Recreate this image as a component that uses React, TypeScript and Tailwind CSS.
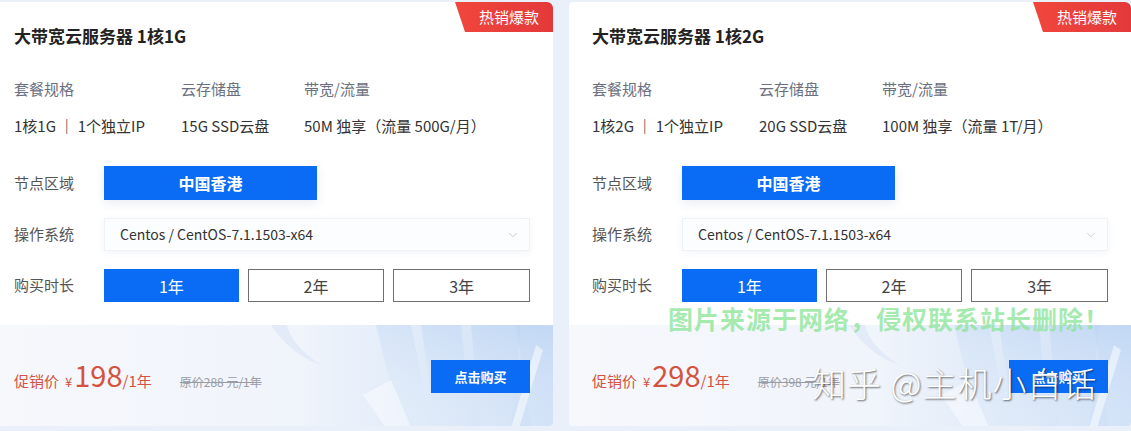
import { ChevronDown } from 'lucide-react';

const plans = [
  {
    name: '大带宽云服务器 1核1G',
    spec: '1核1G ｜ 1个独立IP',
    disk: '15G SSD云盘',
    bw: '50M 独享（流量 500G/月）',
    price: '198',
    orig: '原价288 元/1年',
  },
  {
    name: '大带宽云服务器 1核2G',
    spec: '1核2G ｜ 1个独立IP',
    disk: '20G SSD云盘',
    bw: '100M 独享（流量 1T/月）',
    price: '298',
    orig: '原价398 元/1年',
  },
];

function Decor() {
  // glassy panels in the lower-right of each card
  return (
    <svg className="absolute inset-0 h-full w-full" viewBox="0 0 562 103" preserveAspectRatio="none">
      <defs>
        <linearGradient id="bgGrad" x1="0" y1="0" x2="1" y2="0">
          <stop offset="0" stopColor="#f6f8fc" />
          <stop offset="0.55" stopColor="#f0f4fb" />
          <stop offset="0.8" stopColor="#dde9f8" />
          <stop offset="1" stopColor="#cddff6" />
        </linearGradient>
        <linearGradient id="panel" x1="0" y1="0" x2="0" y2="1">
          <stop offset="0" stopColor="#b9d2f3" stopOpacity="0.7" />
          <stop offset="1" stopColor="#e4eefb" stopOpacity="0.3" />
        </linearGradient>
      </defs>
      <rect width="562" height="103" fill="url(#bgGrad)" />
      <path d="M280 0 Q300 30 330 40 Q300 20 296 0 Z" fill="#dfe8f6" opacity="0.8" />
      <polygon points="385,0 420,0 440,103 410,103" fill="url(#panel)" opacity="0.5" />
      <polygon points="430,0 470,0 480,103 445,103" fill="url(#panel)" opacity="0.6" />
      <polygon points="480,0 530,0 520,103 490,103" fill="url(#panel)" opacity="0.7" />
      <polygon points="525,0 562,0 562,103 540,103" fill="url(#panel)" opacity="0.8" />
      <path d="M372 70 L400 55 L420 103 L395 103 Z" fill="#ffffff" opacity="0.45" />
      <path d="M545 20 L520 103 L528 103 L552 25 Z" fill="#ffffff" opacity="0.5" />
    </svg>
  );
}

function Card({ plan }: { plan: (typeof plans)[number] }) {
  return (
    <div className="relative w-[562px] shrink-0 overflow-hidden rounded-[4px] bg-white">
      <div className="absolute right-0 top-0 flex h-[30px] w-[98px] items-center justify-center rounded-tr-[6px] bg-gradient-to-r from-[#f0463c] to-[#e3393a] pl-[10px] text-[15px] text-white [clip-path:polygon(0_0,100%_0,100%_100%,10px_100%)]">
        热销爆款
      </div>

      <div className="px-[23px] pb-[23px] pt-[22px]">
        <div className="h-6 text-[17px] font-bold leading-6 text-[#222]">{plan.name}</div>

        <div className="mt-[30px] flex text-[15px] leading-[22px] text-[#6b7080]">
          <div className="w-[167px]">套餐规格</div>
          <div className="w-[123px]">云存储盘</div>
          <div>带宽/流量</div>
        </div>
        <div className="mt-[15px] flex text-[15px] leading-[22px] text-[#333]">
          <div className="w-[167px]">{plan.spec}</div>
          <div className="w-[123px]">{plan.disk}</div>
          <div>{plan.bw}</div>
        </div>

        <div className="mt-[29px] flex items-center">
          <div className="w-[90px] text-[15px] text-[#555]">节点区域</div>
          <div className="flex h-[34px] w-[213px] items-center justify-center bg-[#0a6cf4] text-[16px] font-semibold text-white shadow-[0_3px_10px_rgba(30,60,120,0.1)]">
            中国香港
          </div>
        </div>

        <div className="mt-[18px] flex items-center">
          <div className="w-[90px] text-[15px] text-[#555]">操作系统</div>
          <div className="flex h-[33px] flex-1 items-center justify-between border border-[#eef1f5] bg-[#fcfdff] pl-[15px] pr-[9px] text-[14px] text-[#333] shadow-[0_2px_8px_rgba(30,60,120,0.05)]">
            <span>Centos / CentOS-7.1.1503-x64</span>
            <ChevronDown size={14} strokeWidth={1.5} className="text-[#c3c8d2]" />
          </div>
        </div>

        <div className="mt-[18px] flex items-center">
          <div className="w-[90px] text-[15px] text-[#555]">购买时长</div>
          <div className="flex flex-1 gap-[9px]">
            <div className="flex h-[33px] flex-1 items-center justify-center bg-[#0a6cf4] text-[16px] text-white">1年</div>
            <div className="flex h-[33px] flex-1 items-center justify-center border border-[#6f6f6f] bg-white text-[16px] text-[#444]">2年</div>
            <div className="flex h-[33px] flex-1 items-center justify-center border border-[#6f6f6f] bg-white text-[16px] text-[#444]">3年</div>
          </div>
        </div>
      </div>

      <div className="relative h-[103px]">
        <Decor />
        <div className="relative flex h-full items-center justify-between px-[23px]">
          <div className="flex items-baseline text-[#d4533f]">
            <span className="text-[15px]">促销价</span>
            <span className="ml-[6px] text-[13px]">¥</span>
            <span className="ml-[2px] text-[29px] leading-none">{plan.price}</span>
            <span className="text-[15px]">/1年</span>
            <span className="ml-[28px] text-[12px] text-[#9a9ca3] line-through">{plan.orig}</span>
          </div>
          <div className="flex h-[33px] w-[99px] items-center justify-center bg-[#0a6cf4] text-[13px] font-bold text-white">
            点击购买
          </div>
        </div>
      </div>
    </div>
  );
}

export default function App() {
  return (
    <div className="relative h-[431px] w-[1131px] overflow-hidden bg-[#e9f0fa] font-['Noto_Sans_CJK_SC',sans-serif]">
      <div className="ml-[-9px] flex h-[426px] gap-4 pt-[2px]">
        {plans.map((p) => (
          <Card key={p.name} plan={p} />
        ))}
      </div>

      {/* watermarks over the screenshot */}
      <div className="absolute left-[668px] top-[302px] text-[25px] font-bold leading-[32px] tracking-[1px] text-[#8fe59b]/80">
        图片来源于网络，侵权联系站长删除！
      </div>
      <div className="absolute left-[812px] top-[361px] text-[34px] font-light leading-[44px] tracking-[1px] text-white [text-shadow:1px_1px_2px_rgba(0,0,0,0.6)]">
        知乎 @主机小白话
      </div>
    </div>
  );
}
